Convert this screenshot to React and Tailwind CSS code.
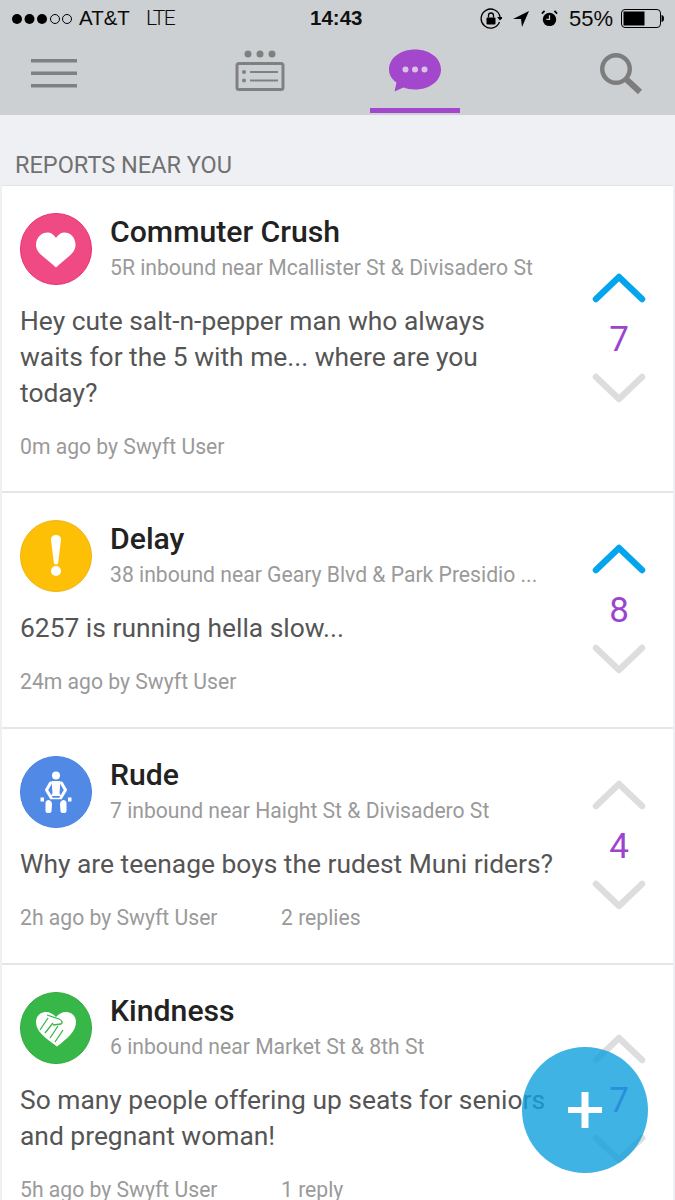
const Chevron = ({ up, color }) => (
  <svg width="54" height="30" viewBox="0 0 54 30" fill="none" className="block">
    <path d={up ? "M4 26 L27 4 L50 26" : "M4 4 L27 26 L50 4"} stroke={color} strokeWidth="6.500" strokeLinecap="round" strokeLinejoin="round" />
  </svg>
);

const Heart = () => (
  <svg width="72" height="72" viewBox="0 0 72 72">
    <circle cx="36" cy="36" r="35.5" fill="#f04a85" stroke="#e82f6c" strokeWidth="1" />
    <path d="M55.5 32 C55.5 24 50 19.500 44.500 19.500 C41 19.500 38 21.500 36 25 C34 21.500 31 19.500 27.500 19.500 C22 19.500 16 24 16 32 C16 41 27 45.500 36 54.500 C45 45.500 55.500 41 55.500 32 Z" fill="#fff" />
  </svg>
);

const Alert = () => (
  <svg width="72" height="72" viewBox="0 0 72 72">
    <circle cx="36" cy="36" r="35.5" fill="#fec007" stroke="#ecb30f" strokeWidth="1" />
    <path d="M31 19.500 C31 16.500 33 15 36 15 C39 15 41 16.500 41 19.500 L38.200 42.500 C38 44 37.200 44.500 36 44.500 C34.800 44.500 34 44 33.800 42.500 Z" fill="#fff" />
    <circle cx="36" cy="51" r="5" fill="#fff" />
  </svg>
);

const Sitter = () => (
  <svg width="72" height="72" viewBox="0 0 72 72">
    <circle cx="36" cy="36" r="35.5" fill="#5189e6" stroke="#4a7fdc" strokeWidth="1" />
    <circle cx="36" cy="19.500" r="4" fill="#fff" />
    <path d="M31.500 25 L40.500 25 L39.500 37 L41 40 L31 40 L32.500 37 Z" fill="#fff" />
    <path d="M30.500 27 L26.500 34 L31 41.500 M41.500 27 L45.500 34 L41 41.500" fill="none" stroke="#fff" strokeWidth="3" strokeLinecap="round" strokeLinejoin="round" />
    <path d="M30 42.500 L42 42.500" stroke="#fff" strokeWidth="1.500" />
    <path d="M29 44 C31 45 32 46 32 48 L31.500 55 C31.500 56.500 30.500 57 28.500 57 C26.500 57 25.500 56.500 25.500 55 L25.500 47 C25.500 45 27 44 29 44 Z" fill="#fff" />
    <path d="M43 44 C41 45 40 46 40 48 L40.500 55 C40.500 56.500 41.500 57 43.500 57 C45.500 57 46.500 56.500 46.500 55 L46.500 47 C46.500 45 45 44 43 44 Z" fill="#fff" />
    <rect x="20.500" y="41.500" width="3.500" height="4" fill="#fff" />
    <rect x="48" y="41.500" width="3.500" height="4" fill="#fff" />
  </svg>
);

const Hands = () => (
  <svg width="72" height="72" viewBox="0 0 72 72">
    <circle cx="36" cy="36" r="35.5" fill="#38b749" stroke="#32a943" strokeWidth="1" />
    <path d="M56 30 C56 24 51.500 20 46 20 C42 20 38.500 22 36 25 C33.500 22 30 20 26 20 C20.500 20 16 24 16 30 C16 39 24 45 37 54.500 C48 46 56 39 56 30 Z" fill="#fff" />
    <path d="M27 23 L39 27 C42 28 43 31 41 32 L33 33 M28 26 L20 38 M33 31 L25 41 M38 34 L30 46 M43 38 L35 50" fill="none" stroke="#38b749" strokeWidth="1.300" />
  </svg>
);

const reports = [
  {
    icon: <Heart />, title: "Commuter Crush", sub: "5R inbound near Mcallister St & Divisadero St",
    body: ["Hey cute salt-n-pepper man who always", "waits for the 5 with me... where are you", "today?"],
    meta: "0m ago by Swyft User", count: 7, up: true, h: "h-[307px]",
  },
  {
    icon: <Alert />, title: "Delay", sub: "38 inbound near Geary Blvd & Park Presidio ...",
    body: ["6257 is running hella slow..."],
    meta: "24m ago by Swyft User", count: 8, up: true, h: "h-[236px]",
  },
  {
    icon: <Sitter />, title: "Rude", sub: "7 inbound near Haight St & Divisadero St",
    body: ["Why are teenage boys the rudest Muni riders?"],
    meta: "2h ago by Swyft User", replies: "2 replies", count: 4, h: "h-[236px]",
  },
  {
    icon: <Hands />, title: "Kindness", sub: "6 inbound near Market St & 8th St",
    body: ["So many people offering up seats for seniors", "and pregnant woman!"],
    meta: "5h ago by Swyft User", replies: "1 reply", count: 7, h: "h-[272px]",
  },
];

function Card({ r }) {
  return (
    <div className={`${r.h} shrink-0 bg-white border-b-2 border-[#e6e6e6] flex pl-[18px]`}>
      <div className="flex-1 min-w-0 pt-[27px]">
        <div className="flex gap-[18px]">
          {r.icon}
          <div className="pt-[1px] whitespace-nowrap">
            <div className="text-[30.200px] leading-[36px] font-medium text-[#222222]">{r.title}</div>
            <div className="text-[21.150px] leading-[30px] mt-[3px] text-[#9a9a9a]">{r.sub}</div>
          </div>
        </div>
        <div className="mt-[18px] text-[26.400px] leading-[36px] text-[#555555] whitespace-nowrap">
          {r.body.map((l) => <div key={l}>{l}</div>)}
        </div>
        <div className="mt-[21px] flex text-[21.150px] leading-[30px] text-[#9a9a9a] whitespace-nowrap">
          <span className="w-[261px]">{r.meta}</span>
          {r.replies && <span>{r.replies}</span>}
        </div>
      </div>
      <div className="w-[54px] mr-[27px] shrink-0 flex flex-col items-center justify-center pb-[2px]">
        <Chevron up color={r.up ? "#04a5ec" : "#dddddd"} />
        <div className="text-[35px] leading-[42px] mt-[14px] mb-[12px] pt-[2px] text-[#9b45cf]">{r.count}</div>
        <Chevron color="#dddddd" />
      </div>
    </div>
  );
}

export default function App() {
  return (
    <div className="relative w-[675px] h-[1200px] overflow-hidden bg-[#eff0f4] font-['Roboto',sans-serif]">
      <header className="h-[115px] bg-[#cdd0d2] flex flex-col">
        <div className="h-[37px] flex items-center justify-between px-[11px] text-[22px] text-[#0a0a0a] font-['Liberation_Sans',sans-serif] relative">
          <div className="flex items-center gap-[3px]">
            <svg width="62" height="14" viewBox="0 0 62 14">
              <circle cx="6" cy="7" r="5" fill="#000" />
              <circle cx="18.500" cy="7" r="5" fill="#000" />
              <circle cx="31" cy="7" r="5" fill="#000" />
              <circle cx="44" cy="7" r="4.500" fill="none" stroke="#000" />
              <circle cx="56" cy="7" r="4.500" fill="none" stroke="#000" />
            </svg>
            <span className="text-[20.500px] ml-[3px]">AT&amp;T</span>
            <span className="text-[21px] font-['Roboto',sans-serif] font-light tracking-[-1.500px] ml-[13px]">LTE</span>
          </div>
          <span className="absolute left-[310px] text-[20.500px] font-bold text-[#111]">14:43</span>
          <div className="flex items-center">
            <svg width="22" height="22" viewBox="0 0 22 22" fill="none">
              <path d="M19.500 14 A9.500 9.500 0 1 1 20 9" stroke="#000" strokeWidth="1.300" />
              <path d="M17 9 L23 9 L20 12.500 Z" fill="#000" />
              <rect x="6.500" y="9.500" width="9" height="7" rx="1" fill="#000" />
              <path d="M8.500 9.500 V7.500 A2.500 2.500 0 0 1 13.500 7.500 V9.500" stroke="#000" strokeWidth="1.300" />
            </svg>
            <svg width="16" height="16" viewBox="0 0 16 16" className="ml-[11px]"><path d="M16 0 L0 8 L8 8 L9 16 Z" fill="#000" /></svg>
            <svg width="17" height="19" viewBox="0 0 19 19" className="ml-[12px]">
              <circle cx="9.500" cy="10.500" r="7.500" fill="#000" />
              <path d="M9.500 6 V10.500 H6" stroke="#cdd0d2" strokeWidth="1.400" fill="none" />
              <path d="M1 4 L4 1 M18 4 L15 1" stroke="#000" strokeWidth="2" />
            </svg>
            <span className="ml-[11px]">55%</span>
            <svg width="43" height="19" viewBox="0 0 43 19" className="ml-[8px]">
              <rect x="0.500" y="0.500" width="39" height="18" rx="3.500" fill="none" stroke="#000" />
              <rect x="2.500" y="2.500" width="21" height="14" fill="#000" />
              <path d="M40.500 6 C42 6 43 7.500 43 9.500 C43 11.500 42 13 40.500 13 Z" fill="#000" />
            </svg>
          </div>
        </div>
        <nav className="flex-1 relative flex items-start">
          <svg width="46" height="30" viewBox="0 0 46 30" className="absolute left-[31px] top-[22px]">
            <rect width="46" height="3.500" fill="#808080" />
            <rect y="12.500" width="46" height="3.500" fill="#808080" />
            <rect y="25" width="46" height="3.500" fill="#808080" />
          </svg>
          <svg width="50" height="42" viewBox="0 0 50 42" className="absolute left-[235px] top-[13px]" fill="none">
            <circle cx="13" cy="4" r="3.500" fill="#808080" />
            <circle cx="25" cy="4" r="3.500" fill="#808080" />
            <circle cx="37" cy="4" r="3.500" fill="#808080" />
            <rect x="2" y="13.500" width="46" height="26" rx="2" stroke="#808080" strokeWidth="3" />
            <circle cx="9" cy="22" r="2" fill="#808080" />
            <circle cx="9" cy="30.500" r="2" fill="#808080" />
            <path d="M15 22 H43 M15 30.500 H43" stroke="#808080" strokeWidth="2" />
          </svg>
          <svg width="54" height="46" viewBox="0 0 54 46" className="absolute left-[388px] top-[12px]">
            <path d="M27 0.500 C41.500 0.500 53 9 53 20.500 C53 32 41.500 40.500 27 40.500 C22.500 40.500 18.500 39.500 15.500 38.500 L6.500 42.500 L8.500 33.500 C3.500 30 1 25.500 1 20.500 C1 9 12.500 0.500 27 0.500 Z" fill="#a347cc" />
            <circle cx="17.500" cy="20.500" r="3" fill="#d8c4e2" />
            <circle cx="27" cy="20.500" r="3" fill="#d8c4e2" />
            <circle cx="36.500" cy="20.500" r="3" fill="#d8c4e2" />
          </svg>
          <div className="absolute left-[370px] top-[71px] w-[90px] h-[5px] bg-[#a347cc]" />
          <svg width="44" height="44" viewBox="0 0 44 44" className="absolute left-[600px] top-[16px]" fill="none">
            <circle cx="16" cy="16" r="13.750" stroke="#7d7d7d" strokeWidth="4.500" />
            <path d="M26 26 L40 39" stroke="#7d7d7d" strokeWidth="6" />
          </svg>
        </nav>
      </header>
      <div className="h-[70px] pl-[15px] pt-[36px] text-[23.500px] leading-[28px] text-[#717171]">REPORTS NEAR YOU</div>
      <div className="mx-[2px] border-t border-[#e4e4e4] flex flex-col">
        {reports.map((r) => <Card key={r.title} r={r} />)}
      </div>
      <button className="absolute left-[522px] top-[1047px] w-[126px] h-[126px] rounded-full bg-[#0ea0dd]/80 flex items-center justify-center">
        <svg width="34" height="36" viewBox="0 0 34 36"><path d="M13.500 0 H20.500 V15 H34 V21 H20.500 V36 H13.500 V21 H0 V15 H13.500 Z" fill="#fff" /></svg>
      </button>
    </div>
  );
}
